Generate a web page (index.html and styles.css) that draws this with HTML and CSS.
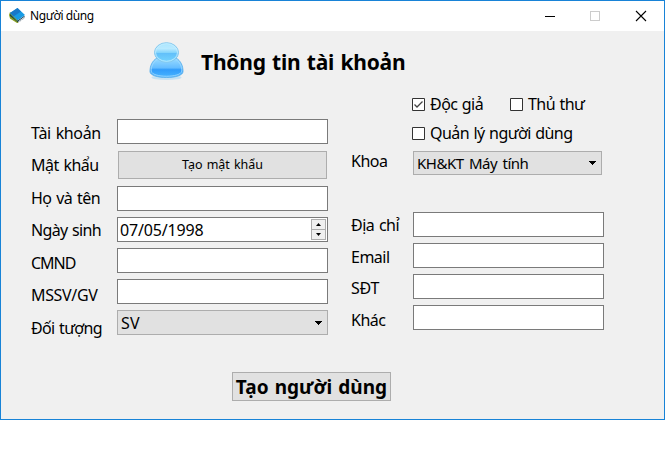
FILE: index.html
```
<!DOCTYPE html>
<html lang="vi">
<head>
<meta charset="utf-8">
<title>Người dùng</title>
<link rel="stylesheet" href="styles.css">
</head>
<body>
<main class="window">
  <header class="titlebar">
    <svg class="app-icon" width="16" height="16" viewBox="0 0 16 16">
      <path d="M1 4 0 7 1 10.500 8 15 9 15 9 12Z" fill="#8aa020"/>
      <path d="M1 6 8 13 15 8 15.500 9 8.500 14 1 8Z" fill="#123c58"/>
      <path d="M9 13.500 15.500 8.500V10L9 14.500Z" fill="#e8f2f8" stroke="#123" stroke-width=".5" stroke-dasharray="1 1"/>
      <path d="M8.500 0 16 7 8.500 12.500 1 5Z" fill="#189be4"/>
      <path d="M1 5 8.500 0 12 3.500 4.500 8.500Z" fill="#1978c8"/>
    </svg>
    <span class="caption">Người dùng</span>
    <svg class="controls" width="103" height="12" viewBox="0 0 103 12" fill="none" shape-rendering="crispEdges">
      <path d="M0 6.500H10" stroke="#000"/>
      <path d="M45.500 1.500H54.500V10.500H45.500Z" stroke="#ccc"/>
      <path d="M91 1 101 11M101 1 91 11" stroke="#000" stroke-width="1.100" shape-rendering="auto"/>
    </svg>
  </header>
  <div class="heading">
    <svg width="38" height="40" viewBox="0 0 38 40">
      <defs>
        <linearGradient id="head" x2="0" y2="1"><stop stop-color="#a9e6ff"/><stop offset=".3" stop-color="#b9eaff"/><stop offset=".5" stop-color="#85d5fc"/><stop offset=".55" stop-color="#62c0fa"/><stop offset="1" stop-color="#75d5ff"/></linearGradient>
        <linearGradient id="body" x2="0" y2="1"><stop stop-color="#9adcff"/><stop offset=".5" stop-color="#66bdff"/><stop offset=".6" stop-color="#309cfb"/><stop offset="1" stop-color="#48b5ff"/></linearGradient>
      </defs>
      <ellipse cx="18.500" cy="36.500" rx="15" ry="2.500" fill="#a9d8f5" opacity=".6"/>
      <path d="M9 17C4 20 2 25 2 30.500 2 38.500 35 38.500 35 30.500 35 25 33 20 28 17Z" fill="url(#body)" stroke="#65b5ed"/>
      <path d="M9 18.500C5 21.500 3.200 25 3.200 30 3.500 37 33.500 37 33.800 30 33.800 25 32 21.500 28 18.500" fill="none" stroke="#a4dcff" stroke-width=".8"/>
      <ellipse cx="18.500" cy="11.500" rx="12" ry="9.800" fill="url(#head)" stroke="#85c8ee"/>
      <ellipse cx="18.500" cy="11.500" rx="11" ry="8.800" fill="none" stroke="#c7efff" stroke-width=".8"/>
    </svg>
    <h1>Thông tin tài khoản</h1>
  </div>
  <form class="form">
    <div class="labels left-labels">
      <span class="l1">Tài khoản</span><span class="l2">Mật khẩu</span><span class="l3">Họ và tên</span><span class="l4">Ngày sinh</span><span class="l5">CMND</span><span class="l6">MSSV/GV</span><span class="l7">Đối tượng</span>
    </div>
    <div class="fields left-fields">
      <div class="box"></div>
      <div class="button small-button"><span>Tạo mật khẩu</span></div>
      <div class="box"></div>
      <div class="box date"><span>07/05/1998</span>
        <div class="spinner"><i class="step"><svg width="5" height="3"><path d="M0 3 2.500 0 5 3Z"/></svg></i><i class="step"><svg width="5" height="3"><path d="M0 0 2.500 3 5 0Z"/></svg></i></div>
      </div>
      <div class="box"></div>
      <div class="box"></div>
      <div class="box select role"><span>SV</span><svg width="7" height="4" shape-rendering="crispEdges"><path d="M0 0H7V1H6V2H5V3H4V4H3V3H2V2H1V1H0Z"/></svg></div>
    </div>
    <div class="labels right-labels">
      <span class="r1">Khoa</span><span class="r2">Địa chỉ</span><span class="r3">Email</span><span class="r4">SĐT</span><span class="r5">Khác</span>
    </div>
    <div class="right-fields">
      <div class="checks">
        <div class="check"><svg width="13" height="13" fill="none"><path d="M.5.5H12.500V12.500H.5Z" fill="#fff" stroke="#333"/><path d="M2.500 6.500 5 9 10.500 3.500" stroke="#444" stroke-width="1.300"/></svg><span class="c1">Độc giả</span></div>
        <div class="check"><svg width="13" height="13"><path d="M.5.5H12.500V12.500H.5Z" fill="#fff" stroke="#333"/></svg><span class="c2">Thủ thư</span></div>
        <div class="check"><svg width="13" height="13"><path d="M.5.5H12.500V12.500H.5Z" fill="#fff" stroke="#333"/></svg><span class="c3">Quản lý người dùng</span></div>
      </div>
      <div class="box select department"><span>KH&amp;KT Máy tính</span><svg width="7" height="4" shape-rendering="crispEdges"><path d="M0 0H7V1H6V2H5V3H4V4H3V3H2V2H1V1H0Z"/></svg></div>
      <div class="fields contact"><div class="box"></div><div class="box"></div><div class="box"></div><div class="box"></div></div>
    </div>
  </form>
  <div class="button submit"><span>Tạo người dùng</span></div>
</main>
</body>
</html>
```
FILE: styles.css
```
* { box-sizing: border-box; }
body { margin: 0; background: #fff; color: #000; font: 16px/20px "Noto Sans", sans-serif; }
svg { display: block; flex: none; }
span { white-space: nowrap; }
.window { width: 665px; height: 420px; border: 1px solid #1883d7; background: #f0f0f0; display: flex; flex-direction: column; }
.titlebar { height: 30px; background: #fff; display: flex; align-items: center; padding: 0 16px 0 8px; flex: none; }
.app-icon { margin-top: -1px; }
.caption { font-size: 12px; line-height: 16px; letter-spacing: -.4px; margin-left: 5px; }
.controls { margin: -1px 0 0 auto; }
.heading { height: 64px; display: flex; padding: 10px 0 0 147px; flex: none; }
.heading h1 { margin: 7px 0 0 15px; font-size: 21px; line-height: 28px; font-weight: 700; letter-spacing: -.2px; word-spacing: 1px; white-space: nowrap; }
.form { height: 246px; display: grid; grid-template-columns: 86px 234px 61px 192px; padding-left: 30px; flex: none; }
.labels { display: flex; flex-direction: column; letter-spacing: -.5px; word-spacing: 1px; }
.left-labels { padding-top: 28px; }
.l1 { letter-spacing: -.35px; }
.l2, .l4, .l6 { margin: 12px 0 13px; }
.l4, .l7 { letter-spacing: -.65px; }
.l5 { letter-spacing: -1px; }
.l6 { letter-spacing: -.35px; }
.right-labels { padding-top: 56px; }
.r2 { margin-top: 44px; }
.r3 { margin-top: 12px; }
.r4 { margin-top: 11px; letter-spacing: -.2px; }
.r5 { margin-top: 12px; }
.fields { display: flex; flex-direction: column; gap: 6px; }
.left-fields { width: 211px; padding-top: 24px; }
.box { height: 25px; flex: none; border: 1px solid #7a7a7a; background: #fff; }
.button { background: #e1e1e1; border: 1px solid #adadad; display: flex; align-items: center; justify-content: center; }
.small-button { height: 28px; margin: 1px; font-size: 12.5px; letter-spacing: -.05px; word-spacing: 1px; }
.date { display: flex; padding-left: 2px; align-items: center; justify-content: space-between; letter-spacing: -.15px; }
.spinner { width: 16px; height: 21px; padding-right: 1px; display: flex; flex-direction: column; }
.step { height: 11px; margin-bottom: -1px; border: 1px solid #adadad; background: #f0f0f0; display: flex; align-items: center; justify-content: center; }
.select { background: #e1e1e1; border-color: #adadad; display: flex; align-items: center; justify-content: space-between; padding: 0 5px 0 3px; letter-spacing: -.5px; }
.role { letter-spacing: .1px; }
.checks { display: grid; grid-template-columns: 98px 90px; row-gap: 9px; }
.check { height: 20px; display: flex; align-items: center; gap: 5px; letter-spacing: -.55px; word-spacing: .8px; }
.right-fields { margin-top: -1px; }
.department { width: 189px; height: 24px; margin: 8px 0 37px 1px; font-size: 15px; letter-spacing: -.5px; word-spacing: 2px; }
.contact { margin-left: 1px; width: 191px; }
.submit { width: 159px; height: 29px; margin: 31px 0 0 231px; padding-top: 1px; font-size: 19px; font-weight: 700; letter-spacing: .05px; word-spacing: 1px; }
```
